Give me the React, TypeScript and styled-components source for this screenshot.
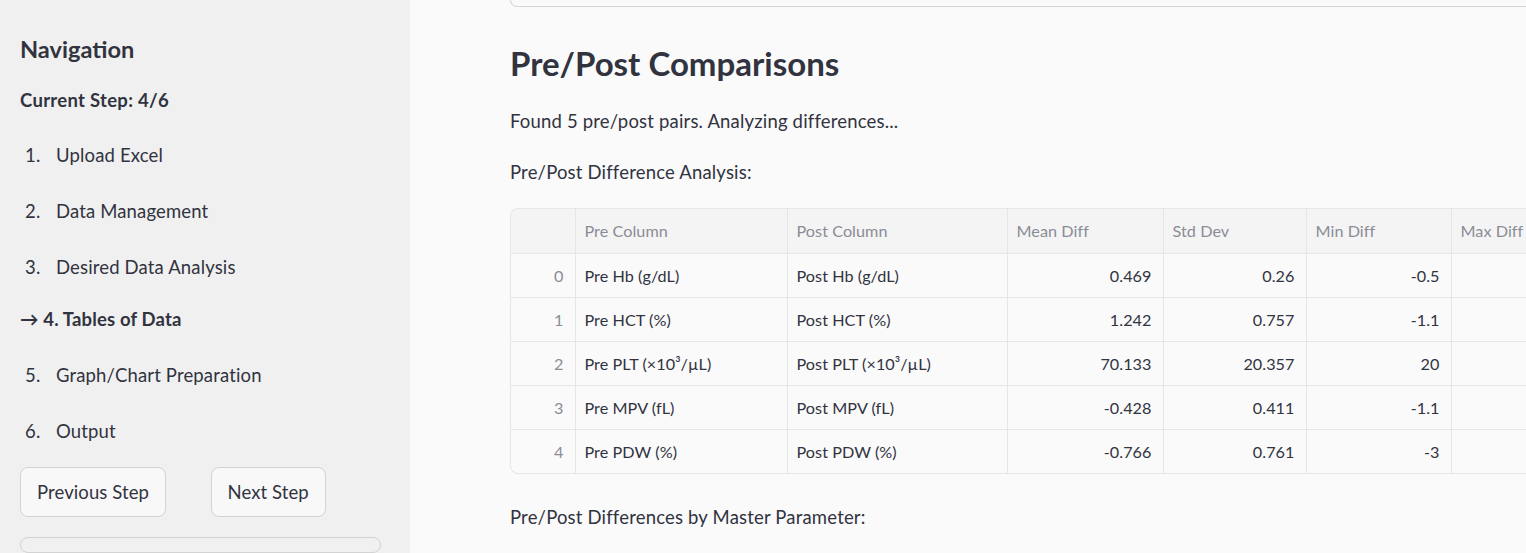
import styled, { createGlobalStyle } from "styled-components";

const GlobalStyle = createGlobalStyle`
  html, body {
    margin: 0;
    padding: 0;
    background: #fafafa;
    font-family: Lato, "Liberation Sans", sans-serif;
    color: #31333f;
  }
  * {
    box-sizing: border-box;
  }
`;

const Page = styled.div`
  display: flex;
  width: 100vw;
  height: 100vh;
  overflow: hidden;
`;

const Sidebar = styled.aside`
  flex: 0 0 410px;
  background: #f0f0f0;
  padding: 34px 29px 0 20px;
  display: flex;
  flex-direction: column;
`;

const SideTitle = styled.h3`
  margin: 0;
  font-size: 23.6px;
  font-weight: 700;
  line-height: 30px;
`;

const CurrentStep = styled.p`
  margin: 24px 0 31px;
  font-size: 18.5px;
  font-weight: 700;
  line-height: 24px;
  letter-spacing: 0.3px;
`;

const StepList = styled.div`
  display: flex;
  flex-direction: column;
`;

const Step = styled.div<{ $active?: boolean }>`
  display: flex;
  font-size: 18.5px;
  line-height: 24px;
  letter-spacing: 0.15px;
  margin: ${(p) => (p.$active ? "-4px 0 32px" : "0 0 32px")};
  padding-left: ${(p) => (p.$active ? "0" : "5px")};
  font-weight: ${(p) => (p.$active ? 700 : 400)};
`;

const StepNum = styled.span`
  width: 31px;
`;

const ButtonRow = styled.div`
  display: grid;
  grid-template-columns: 1fr 1fr;
  gap: 20px;
  margin-top: -8px;
`;

const Button = styled.button`
  justify-self: start;
  height: 50px;
  padding: 0 16px;
  border: 1px solid #d3d3d3;
  border-radius: 8px;
  background: #f8f8f8;
  font-family: inherit;
  font-size: 18.5px;
  letter-spacing: 0.1px;
  color: #31333f;
`;

const SideBox = styled.div`
  margin-top: 20px;
  height: 60px;
  border: 1px solid #d3d3d3;
  border-radius: 8px;
`;

const Main = styled.main`
  flex: 1;
  min-width: 0;
  padding-left: 100px;
  overflow: hidden;
`;

const Content = styled.div`
  width: 1200px;
`;

const TopCard = styled.div`
  height: 7px;
  border: 1px solid #d5d5d5;
  border-top: none;
  border-right: none;
  border-radius: 0 0 0 8px;
`;

const Heading = styled.h2`
  margin: 37px 0 0;
  font-size: 33px;
  font-weight: 700;
  line-height: 38px;
`;

const Text = styled.p<{ $gap: number }>`
  margin: ${(p) => p.$gap}px 0 0;
  font-size: 18.5px;
  line-height: 24px;
  letter-spacing: 0.18px;
`;

const TableWrap = styled.div`
  margin-top: 24px;
  border: 1px solid #e6e6e6;
  border-right: none;
  border-radius: 8px 0 0 8px;
  overflow: hidden;
`;

const Table = styled.table`
  border-collapse: collapse;
  table-layout: fixed;
  width: 1250px;
  font-size: 16.2px;
  letter-spacing: 0.05px;
`;

const Th = styled.th`
  height: 44px;
  padding: 0 10px 0 9px;
  background: #f4f4f4;
  color: #8a8c96;
  font-weight: 400;
  text-align: left;
  white-space: nowrap;
  border-right: 1px solid #e6e6e6;
  border-bottom: 1px solid #e6e6e6;
`;

const Td = styled.td<{ $num?: boolean; $index?: boolean }>`
  height: 44px;
  padding: 0 11px 0 9px;
  white-space: nowrap;
  text-align: ${(p) => (p.$num || p.$index ? "right" : "left")};
  color: ${(p) => (p.$index ? "#8a8c96" : "#31333f")};
  border-right: 1px solid #e6e6e6;
  border-bottom: 1px solid #e6e6e6;
  tr:last-child > & {
    border-bottom: none;
  }
`;

const steps = [
  "Upload Excel",
  "Data Management",
  "Desired Data Analysis",
  "Tables of Data",
  "Graph/Chart Preparation",
  "Output",
];

const columns = ["Pre Column", "Post Column", "Mean Diff", "Std Dev", "Min Diff", "Max Diff", "Pairs"];
const widths = [64, 212, 220, 156, 143, 145, 150, 160];

const rows = [
  ["Pre Hb (g/dL)", "Post Hb (g/dL)", "0.469", "0.26", "-0.5", "0.9", "62"],
  ["Pre HCT (%)", "Post HCT (%)", "1.242", "0.757", "-1.1", "3", "62"],
  ["Pre PLT (×10³/µL)", "Post PLT (×10³/µL)", "70.133", "20.357", "20", "120", "62"],
  ["Pre MPV (fL)", "Post MPV (fL)", "-0.428", "0.411", "-1.1", "0.8", "62"],
  ["Pre PDW (%)", "Post PDW (%)", "-0.766", "0.761", "-3", "1.2", "62"],
];

const App = () => {
  return (
    <>
      <GlobalStyle />
      <Page>
        <Sidebar>
          <SideTitle>Navigation</SideTitle>
          <CurrentStep>Current Step: 4/6</CurrentStep>
          <StepList>
            {steps.map((s, i) =>
              i === 3 ? (
                <Step key={s} $active>
                  → {i + 1}. {s}
                </Step>
              ) : (
                <Step key={s}>
                  <StepNum>{i + 1}.</StepNum>
                  {s}
                </Step>
              )
            )}
          </StepList>
          <ButtonRow>
            <Button>Previous Step</Button>
            <Button>Next Step</Button>
          </ButtonRow>
          <SideBox />
        </Sidebar>
        <Main>
          <Content>
            <TopCard />
            <Heading>Pre/Post Comparisons</Heading>
            <Text $gap={27}>Found 5 pre/post pairs. Analyzing differences...</Text>
            <Text $gap={27}>Pre/Post Difference Analysis:</Text>
            <TableWrap>
              <Table>
                <colgroup>
                  {widths.map((w, i) => (
                    <col key={i} style={{ width: w }} />
                  ))}
                </colgroup>
                <thead>
                  <tr>
                    <Th />
                    {columns.map((c) => (
                      <Th key={c}>{c}</Th>
                    ))}
                  </tr>
                </thead>
                <tbody>
                  {rows.map((r, i) => (
                    <tr key={i}>
                      <Td $index>{i}</Td>
                      {r.map((v, j) => (
                        <Td key={j} $num={j > 1}>
                          {v}
                        </Td>
                      ))}
                    </tr>
                  ))}
                </tbody>
              </Table>
            </TableWrap>
            <Text $gap={31}>Pre/Post Differences by Master Parameter:</Text>
          </Content>
        </Main>
      </Page>
    </>
  );
};

export default App;
